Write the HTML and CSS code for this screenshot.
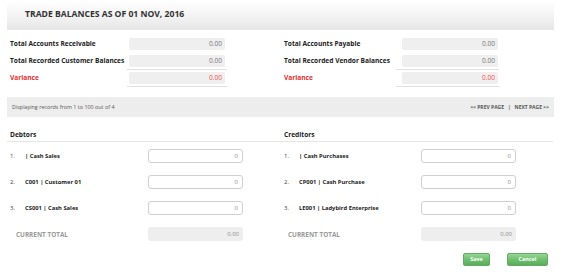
FILE: index.html
```html
<!DOCTYPE html>
<html>
<head>
<meta charset="utf-8">
<link rel="stylesheet" href="styles.css">
</head>
<body>
<div class="page">
  <div class="header"><h1 class="title">TRADE BALANCES AS OF 01 NOV, 2016</h1></div>

  <div class="summary">
    <div class="col col-left">
      <div class="srow"><span class="slabel">Total Accounts Receivable</span><div class="swrap"><div class="sbox">0.00</div></div></div>
      <div class="srow"><span class="slabel">Total Recorded Customer Balances</span><div class="swrap ruled"><div class="sbox">0.00</div></div></div>
      <div class="srow"><span class="slabel red">Variance</span><div class="swrap ruled"><div class="sbox red-val">0.00</div></div></div>
    </div>
    <div class="col col-right">
      <div class="srow"><span class="slabel">Total Accounts Payable</span><div class="swrap"><div class="sbox">0.00</div></div></div>
      <div class="srow"><span class="slabel">Total Recorded Vendor Balances</span><div class="swrap ruled"><div class="sbox">0.00</div></div></div>
      <div class="srow"><span class="slabel red">Variance</span><div class="swrap ruled"><div class="sbox red-val">0.00</div></div></div>
    </div>
  </div>

  <div class="pager">
    <span class="pager-info">Displaying records from 1 to 100 out of 4</span>
    <span class="pager-links">&lt;&lt; PREV PAGE &nbsp;&nbsp;|&nbsp;&nbsp; NEXT PAGE &gt;&gt;</span>
  </div>

  <div class="lists">
    <div class="col col-left">
      <div class="sec-head">Debtors</div>
      <div class="lrow"><span class="num">1.</span><span class="name">| Cash Sales</span><div class="inbox">0</div></div>
      <div class="lrow"><span class="num">2.</span><span class="name">C001 | Customer 01</span><div class="inbox">0</div></div>
      <div class="lrow"><span class="num">3.</span><span class="name">CS001 | Cash Sales</span><div class="inbox">0</div></div>
      <div class="lrow total"><span class="tlabel">CURRENT TOTAL</span><div class="totbox">0.00</div></div>
    </div>
    <div class="col col-right">
      <div class="sec-head">Creditors</div>
      <div class="lrow"><span class="num">1.</span><span class="name">| Cash Purchases</span><div class="inbox">0</div></div>
      <div class="lrow"><span class="num">2.</span><span class="name">CP001 | Cash Purchase</span><div class="inbox">0</div></div>
      <div class="lrow"><span class="num">3.</span><span class="name">LE001 | Ladybird Enterprise</span><div class="inbox">0</div></div>
      <div class="lrow total"><span class="tlabel">CURRENT TOTAL</span><div class="totbox">0.00</div></div>
    </div>
  </div>

  <div class="actions">
    <button class="btn btn-save">Save</button>
    <button class="btn btn-cancel">Cancel</button>
  </div>
</div>
</body>
</html>
```

FILE: styles.css
```css
html, body {
  margin: 0;
  padding: 0;
  background: #ffffff;
}
body {
  font-family: "Open Sans", "DejaVu Sans", sans-serif;
  color: #222;
}
.page {
  margin-left: 7px;
  width: 547px;
}
.header {
  height: 30px;
  background: linear-gradient(to bottom, #ffffff 0%, #f4f4f4 50%, #e6e6e6 100%);
  display: flex;
  align-items: center;
  padding-left: 18px;
}
.title {
  margin: 0;
  font-size: 8.6px;
  font-weight: 700;
  color: #333;
  letter-spacing: 0;
  padding-bottom: 2px;
}
.summary, .lists {
  display: grid;
  grid-template-columns: 277px 270px;
}
.summary {
  padding-top: 8px;
}
.col-left {
  padding-left: 3px;
}
.srow {
  display: flex;
  align-items: flex-start;
}
.slabel {
  font-size: 6.6px;
  font-weight: 700;
  line-height: 12px;
  color: #222;
}
.col-left .slabel { width: 117px; }
.col-right .slabel { width: 112px; }
.slabel.red { color: #e62e2e; }
.swrap {
  padding: 0 2px 2px 2px;
  margin-bottom: 2px;
  border-bottom: 1px solid transparent;
}
.col-right .swrap { padding-left: 6px; padding-right: 1px; }
.swrap.ruled { border-bottom-color: #e0e0e0; }
.sbox {
  width: 93px;
  height: 12px;
  line-height: 12px;
  background: #efefef;
  border-radius: 2px;
  text-align: right;
  padding-right: 3px;
  font-size: 6.6px;
  color: #777;
}
.sbox.red-val { color: #f25050; }

.pager {
  margin-top: 8px;
  height: 20px;
  background: #ededed;
  display: flex;
  align-items: center;
  justify-content: space-between;
  padding: 0 5px 0 5px;
}
.pager-info {
  font-size: 5.4px;
  color: #555;
}
.pager-links {
  font-size: 5px;
  font-weight: 700;
  color: #555;
}

.sec-head {
  padding-top: 13px;
  line-height: 10px;
  padding-bottom: 1px;
  font-size: 6.6px;
  font-weight: 700;
  color: #222;
  border-bottom: 1px solid #e6e6e6;
  margin-bottom: 7px;
}
.col-left .sec-head { margin-left: -3px; padding-left: 3px; margin-right: 4px; }
.col-right .sec-head { margin-left: -4px; padding-left: 4px; margin-right: 1px; }

.lrow {
  display: flex;
  align-items: center;
  height: 14px;
  margin-bottom: 12px;
}
.num {
  width: 15px;
  font-size: 6px;
  color: #444;
}
.name {
  font-size: 5.8px;
  font-weight: 700;
  color: #222;
  width: 123px;
  padding-bottom: 1px;
}
.col-right .name { width: 122px; }
.inbox {
  box-sizing: border-box;
  width: 95px;
  height: 14px;
  line-height: 12px;
  border: 1px solid #cfcfcf;
  border-radius: 3px;
  background: #fff;
  text-align: right;
  padding-right: 4px;
  font-size: 6px;
  color: #888;
}
.tlabel {
  font-size: 6.4px;
  font-weight: 700;
  color: #999;
  padding-left: 6px;
  width: 132px;
}
.col-right .tlabel { padding-left: 4px; width: 133px; }
.totbox {
  box-sizing: border-box;
  width: 95px;
  height: 14px;
  line-height: 14px;
  background: #eeeeee;
  border-radius: 3px;
  text-align: right;
  padding-right: 4px;
  font-size: 6px;
  color: #888;
}

.actions {
  display: flex;
  justify-content: flex-end;
  gap: 17px;
  padding-right: 6px;
  margin-top: 0;
}
.btn {
  font-family: "Open Sans", "DejaVu Sans", sans-serif;
  height: 13px;
  padding: 0;
  border: 1px solid #64a964;
  border-radius: 2px;
  background: linear-gradient(to bottom, #95d595 0%, #6cbd6c 55%, #5aae5a 100%);
  color: #fff;
  font-size: 5.4px;
  font-weight: 700;
  line-height: 11px;
  box-shadow: 0 1px 1px rgba(0,0,0,0.15);
}
.btn-save { width: 27px; }
.btn-cancel { width: 41px; }
```
